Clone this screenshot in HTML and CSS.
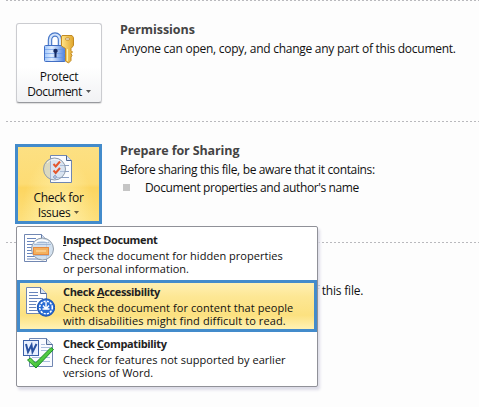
FILE: index.html
```
<!DOCTYPE html>
<html lang="en">
<head>
<meta charset="utf-8">
<title>Info</title>
<link rel="stylesheet" href="styles.css">
</head>
<body>
<main class="page">
  <section class="section">
    <button class="tile">
      <svg class="tile-icon" width="32" height="34" viewBox="0 0 32 34">
        <defs>
          <linearGradient id="lock" x2="1"><stop stop-color="#9fc6fb"/><stop offset=".35" stop-color="#e0edff"/><stop offset="1" stop-color="#477ddd"/></linearGradient>
          <linearGradient id="key" x2="1"><stop stop-color="#ffe58a"/><stop offset="1" stop-color="#e0a62c"/></linearGradient>
        </defs>
        <path d="M7 15V9a5 5.500 0 0 1 10 0v6" fill="none" stroke="#4777c8" stroke-width="4.500"/>
        <path d="M7 15V9a5 5.500 0 0 1 10 0v6" fill="none" stroke="#d3e4fc" stroke-width="2.200"/>
        <rect x="1.500" y="14.500" width="21" height="16" rx="1" fill="url(#lock)" stroke="#416ec4"/>
        <path d="M2 18.500h20M2 22.500h20M2 26.500h20" stroke="#5f91e3" opacity=".6"/>
        <path d="M10.300 20a2.200 2.200 0 0 1 4.400 0c0 .8-.6 1.300-1.200 1.700V26.500h-2v-4.800c-.6-.4-1.200-.9-1.200-1.700z" fill="#152a62"/>
        <path d="M19 4.500h10l1.500 2v8l-2.500 3v2l1.500 1.500-1.500 1.500 1 2-1 1.500v3.500L25.500 32 22.500 30V17.500l-4-2.500V6z" fill="url(#key)" stroke="#c28a24"/>
        <path d="M24.500 18v12" stroke="#fff0a8"/><rect x="22.500" y="7" width="4" height="2" rx="1" fill="#fff" stroke="#ae7922" stroke-width=".8"/>
      </svg>
      <span class="tile-label protect">Protect</span>
      <span class="tile-label"><span class="docword">Document</span><svg class="arrow" width="5" height="3" viewBox="0 0 5 3"><path d="M0 0h5L2.500 3z" fill="#555"/></svg></span>
    </button>
    <div class="copy">
      <h2 class="perm">Permissions</h2>
      <p class="anyone">Anyone can open, copy, and change any part of this document.</p>
    </div>
  </section>

  <section class="section sharing">
    <button class="tile tile-active">
      <svg class="tile-icon" width="32" height="34" viewBox="0 0 32 34">
        <path d="M8.500 3.500h16l5 5v22h-21z" fill="#fbfcff" stroke="#6f86b3"/>
        <path d="M24.500 3.500v5h5" fill="#dce6f6" stroke="#4c658f"/>
        <path d="M18 13.500h9M18 19.500h9M15 25.500h12" stroke="#8a9fc4"/>
        <circle cx="12.500" cy="17" r="11" fill="#c5d4e8" fill-opacity=".6" stroke="#8e9aaa"/>
        <path d="M5 11a9.500 9.500 0 0 1 14-1" fill="none" stroke="#fff" opacity=".7"/>
        <path d="M11.500 12l2.200 2.500L18 9.500M11.500 18.500l2.200 2.500L18 16" fill="none" stroke="#e4562d" stroke-width="2"/>
        <circle cx="13" cy="25" r="1.300" fill="#fff" stroke="#7089bc"/>
      </svg>
      <span class="tile-label checkfor">Check for</span>
      <span class="tile-label"><span class="issues">Issues</span><svg class="arrow" width="5" height="3" viewBox="0 0 5 3"><path d="M0 0h5L2.500 3z" fill="#665c3d"/></svg></span>
    </button>
    <div class="copy">
      <h2 class="prep">Prepare for Sharing</h2>
      <p class="before">Before sharing this file, be aware that it contains:</p>
      <ul class="findings"><li class="docprops">Document properties and author's name</li></ul>
    </div>
    <div class="menu">
      <div class="item">
        <svg class="item-icon" width="32" height="32" viewBox="0 1 32 32">
          <path d="M1.500 2.500h17l5 5v22h-22z" fill="#fff" stroke="#7187b2"/><path d="M18.500 2.500v5h5" fill="#d8e2f2" stroke="#637ba8"/>
          <path d="M4 6.500h9M4 9.500h7M4 12.500h6M4 15.500h5M4 18.500h5M4 21.500h6M4 24.500h8M4 27h14" stroke="#6885bc"/>
          <circle cx="19.500" cy="17" r="11" fill="#cbdcec" fill-opacity=".85" stroke="#929da9"/>
          <path d="M12 10.500h14M11 12.500h17M12 23.500h14" stroke="#91a9cc" opacity=".7"/>
          <rect x="10.500" y="15.500" width="15" height="7" fill="#f4b15e" stroke="#e58b42"/><path d="M13 18.500h10v1H13z" fill="#ffe3b2"/>
          <path d="M12 11a9.500 9.500 0 0 1 13-1" fill="none" stroke="#fff" stroke-width="1.500"/>
        </svg>
        <div class="item-copy"><h3 class="i1"><u>I</u>nspect Document</h3><p class="d1">Check the document for hidden properties</p><p class="d2">or personal information.</p></div>
      </div>
      <div class="item item-active">
        <svg class="item-icon" width="32" height="32" viewBox="0 0 32 32">
          <path d="M3.500 2.500h14l6 6v20h-20z" fill="#fff" stroke="#7187b2"/><path d="M17.500 2.500v6h6" fill="#d8e2f2" stroke="#526a98"/>
          <path d="M6 7.500h9M6 10.500h9M6 13.500h14M6 16.500h8M6 19.500h7M6 22.500h7M6 25.500h8" stroke="#6885bc"/>
          <circle cx="23" cy="22.500" r="8.700" fill="#286bd3" stroke="#1a50ae"/>
          <circle cx="23" cy="22.500" r="6.300" fill="none" stroke="#fff" stroke-width="1.500" stroke-dasharray="2.200 1.100"/>
          <path d="M23 17v6.500M20 20.500l3 3.500 3-3.500M19.500 24h7" fill="none" stroke="#fff" stroke-width="1.400"/>
        </svg>
        <div class="item-copy"><h3 class="i2">Check <u>A</u>ccessibility</h3><p class="d3">Check the document for content that people</p><p class="d4">with disabilities might find difficult to read.</p></div>
      </div>
      <div class="item item-last">
        <svg class="item-icon" width="32" height="32" viewBox="0 0 32 32">
          <defs><linearGradient id="tick" x2="1" y2="1"><stop stop-color="#8df15c"/><stop offset="1" stop-color="#1aa62a"/></linearGradient></defs>
          <path d="M6.500 1.500h17l6 6v22h-23z" fill="#f9fbff" stroke="#7187b2"/><path d="M23.500 1.500v6h6" fill="#d8e2f2" stroke="#526a98"/>
          <path d="M18 7.500h4M18 10.500h9M18 13.500h9M9 20.500h18M9 24.500h18" stroke="#aabddd"/>
          <rect x=".5" y="3.500" width="15" height="15" fill="#e8f0ff" stroke="#3b61a9"/>
          <path d="M3 7l2 8 3.500-7 1 7L13.500 7" fill="none" stroke="#2851a1" stroke-width="2"/>
          <path d="M4.500 23l3-2 5 5L28 10.500l2.500 2L13 31z" fill="url(#tick)" stroke="#168c25"/>
        </svg>
        <div class="item-copy"><h3 class="i3">Check <u>C</u>ompatibility</h3><p class="d5">Check for features not supported by earlier</p><p class="d6">versions of Word.</p></div>
      </div>
    </div>
  </section>

  <section class="section versions">
    <p class="tail">f this file.</p>
  </section>
</main>
</body>
</html>
```
FILE: styles.css
```
* { box-sizing: border-box; }
body { margin: 0; background: #fdfdfd; color: #111; font: 12px/18px "Open Sans", "Noto Sans", sans-serif; overflow: hidden; }
h2, h3, p, ul { margin: 0; padding: 0; white-space: nowrap; }
.page { width: 479px; height: 407px; padding-left: 6px; }
.section { position: relative; display: flex; height: 121px; padding: 22px 0 0 10px;
  background: repeating-linear-gradient(90deg, #b9b9bd 0 2px, transparent 2px 4px) 0 0 / 100% 1px no-repeat; }
.tile { display: flex; flex-direction: column; align-items: center; flex: none; width: 86px; height: 80px; margin-top: 1px; padding: 7px 0 0;
  border: 1px solid #cbccd0; border-bottom-color: #97999e; border-radius: 3px; background: linear-gradient(#fff 55%, #f1f2f4); box-shadow: 0 1px 1px #ddd;
  color: #111; font: inherit; line-height: 15px; }
.tile-icon { display: block; flex: none; margin: 0 0 4px -1px; }
.tile-label { display: flex; align-items: center; height: 15px; white-space: nowrap; }
.arrow { margin-left: 4px; }
.copy { margin-left: 18px; }
h2 { color: #444; font-size: 12.5px; line-height: 18px; }
.copy h2 { margin-top: -1px; }
.copy p { margin-top: 1px; }
.perm { letter-spacing: -.05px; }
.prep { letter-spacing: -.12px; }
.anyone { letter-spacing: -.26px; }
.before { letter-spacing: -.35px; }
.docprops { letter-spacing: -.4px; }
.protect { letter-spacing: -.3px; }
.docword { letter-spacing: -.5px; }
.checkfor, .issues { letter-spacing: -.33px; }
.sharing { padding-top: 23px; }
.sharing .copy h2 { margin-top: -2px; }
.sharing .tile { width: 87px; margin: 0 0 0 -1px; border: 3px solid #438bcb; border-radius: 0; padding-top: 5px; box-shadow: none;
  background: radial-gradient(ellipse at 50% 100%, #fff2ae 0, #fff2ae00 65%), linear-gradient(#fce083, #fddc74 50%, #fcd560 55%, #fde07d); }
.findings { list-style: none; }
.findings li { display: flex; align-items: center; }
.findings li::before { content: ""; width: 7px; height: 7px; margin: 0 15px 2px 3px; background: #c5c5c5; }
.menu { position: absolute; z-index: 1; left: 10px; top: 105px; width: 302px; height: 161px; border: 1px solid #909198; border-radius: 2px; background: #fff; box-shadow: 2px 3px 3px #dcdbe7; }
.item { display: flex; height: 53px; padding: 6px 0 0 6px; }
.item-icon { flex: none; }
.item-copy { margin-left: 8px; }
.item-active { height: 52px; padding: 2px 0 0 3px; border: 3px solid #438bcb; background: linear-gradient(#fff0b3 0, #fde794 30%, #fce180 70%, #fff2b4); }
.item-last { padding-top: 5px; }
h3 { margin-bottom: 3px; font-size: 11px; line-height: 13px; letter-spacing: -.36px; color: #222; }
h3 u { text-underline-offset: 1px; }
.item p { font-size: 11px; line-height: 13px; letter-spacing: .03px; }
.item .d3 { letter-spacing: .07px; }
.item .d4 { letter-spacing: .1px; }
.versions { padding: 40px 0 0 309px; }
.tail { letter-spacing: -.2px; }
```
